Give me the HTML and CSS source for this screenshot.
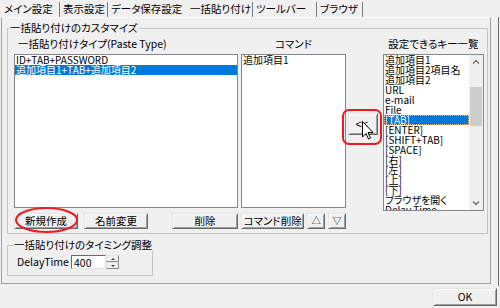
FILE: index.html
```html
<!DOCTYPE html>
<html lang="ja">

<head>
    <meta charset="UTF-8" />
    <title>設定</title>
    <link rel="stylesheet" href="styles.css">
</head>

<body>
    <div class="tabs">
        <div class="tab tab-main">メイン設定</div>
        <div class="tab tab-view">表示設定</div>
        <div class="tab tab-data">データ保存設定</div>
        <div class="tab tab-paste active">一括貼り付け</div>
        <div class="tab tab-tool">ツールバー</div>
        <div class="tab tab-browser">ブラウザ</div>
    </div>

    <div class="frame">
        <div class="panel">
            <fieldset class="group group-custom">
                <legend>一括貼り付けのカスタマイズ</legend>
                <div class="columns">
                    <div class="col col-type">
                        <div class="col-label label-left">一括貼り付けタイプ(Paste Type)</div>
                        <div class="listbox list-type">
                            <div class="item">ID+TAB+PASSWORD</div>
                            <div class="item selected">追加項目1+TAB+追加項目2</div>
                        </div>
                        <div class="btn-row">
                            <button class="btn btn-wide marked">新規作成
                                <svg class="mark-ellipse" width="63" height="26" viewBox="0 0 63 26">
                                    <ellipse cx="31.5" cy="13" rx="30.5" ry="12" fill="none" stroke="#ec1c24" stroke-width="2" />
                                </svg>
                            </button>
                            <button class="btn btn-wide btn-rename">名前変更</button>
                            <button class="btn btn-delete">削除</button>
                        </div>
                    </div>

                    <div class="col col-command">
                        <div class="col-label">コマンド</div>
                        <div class="listbox list-command">
                            <div class="item">追加項目1</div>
                        </div>
                        <div class="btn-row">
                            <button class="btn btn-wide">コマンド削除</button>
                            <button class="btn btn-arrow">△</button>
                            <button class="btn btn-arrow">▽</button>
                        </div>
                    </div>

                    <div class="col col-move">
                        <div class="move-wrap">
                            <button class="btn btn-move">&lt;&lt;</button>
                            <span class="mark-box"></span>
                            <svg class="cursor" width="12" height="19" viewBox="0 0 12 19">
                                <path d="M0.5 0.5 V16 L4 12.5 L6.5 18 L8.5 17 L6 11.5 H11 Z" fill="#fff" stroke="#000" stroke-width="1" stroke-linejoin="round" />
                            </svg>
                        </div>
                    </div>

                    <div class="col col-keys">
                        <div class="col-label">設定できるキー一覧</div>
                        <div class="listbox list-keys">
                            <div class="key-items">
                                <div class="item">追加項目1</div>
                                <div class="item">追加項目2項目名</div>
                                <div class="item">追加項目2</div>
                                <div class="item">URL</div>
                                <div class="item">e-mail</div>
                                <div class="item">File</div>
                                <div class="item selected focused">[TAB]</div>
                                <div class="item">[ENTER]</div>
                                <div class="item">[SHIFT+TAB]</div>
                                <div class="item">[SPACE]</div>
                                <div class="item">[右]</div>
                                <div class="item">[左]</div>
                                <div class="item">[上]</div>
                                <div class="item">[下]</div>
                                <div class="item">ブラウザを開く</div>
                                <div class="item">Delay Time</div>
                            </div>
                            <div class="scrollbar">
                                <div class="sb-btn">
                                    <svg width="8" height="6" viewBox="0 0 8 6"><path d="M1 4.5 L4 1.5 L7 4.5" fill="none" stroke="#606060" stroke-width="1.2" /></svg>
                                </div>
                                <div class="sb-thumb"></div>
                                <div class="sb-btn sb-down">
                                    <svg width="8" height="6" viewBox="0 0 8 6"><path d="M1 1.5 L4 4.5 L7 1.5" fill="none" stroke="#606060" stroke-width="1.2" /></svg>
                                </div>
                            </div>
                        </div>
                    </div>
                </div>
            </fieldset>

            <fieldset class="group group-timing">
                <legend>一括貼り付けのタイミング調整</legend>
                <div class="delay-row">
                    <label class="delay-label" for="delay">DelayTime</label>
                    <input class="delay-input" id="delay" type="text" value="400" />
                    <div class="spinner">
                        <span class="spin spin-up"></span>
                        <span class="spin spin-down"></span>
                    </div>
                </div>
            </fieldset>
        </div>
    </div>

    <div class="footer">
        <button class="btn btn-ok">OK</button>
    </div>
</body>

</html>
```

FILE: styles.css
```css
* {
    box-sizing: border-box;
}

body {
    margin: 0;
    width: 500px;
    height: 308px;
    overflow: hidden;
    background: #f0f0f0;
    color: #000;
    font-family: 'Noto Sans CJK JP', sans-serif;
    font-size: 10.5px;
    font-feature-settings: "palt";
}

/* tab strip */

.tabs {
    display: flex;
    height: 17px;
    padding-left: 1px;
}

.tab {
    margin-top: 2px;
    height: 15px;
    line-height: 14px;
    padding-left: 3px;
    border-right: 1px solid #7a7a7a;
    white-space: nowrap;
    overflow: hidden;
}

.tab-main {
    width: 59px;
}

.tab-view {
    width: 48px;
}

.tab-data {
    width: 78px;
    border-right: none;
}

.tab-paste {
    width: 67px;
    padding-left: 4px;
}

.tab-tool {
    width: 64px;
}

.tab-browser {
    width: 46px;
}

/* page frame */

.frame {
    width: 499px;
    height: 269px;
    padding-left: 1px;
    border-right: 1px solid #6d6d6d;
}

.panel {
    width: 490px;
    height: 267px;
    border: 1px solid #a0a0a0;
    border-top-color: #fff;
    padding: 4px 0 0 5px;
}

.group {
    margin: 0;
    min-width: 0;
    border: 1px solid #c4c4c4;
    padding: 0 3px 4px 2px;
}

.group legend {
    height: 12px;
    line-height: 12px;
    padding: 0 1px;
    margin-left: -1px;
    white-space: nowrap;
}

.group-custom {
    width: 481px;
}

.columns {
    display: flex;
    margin-left: 4px;
}

.col-label {
    height: 12px;
    line-height: 12px;
    margin-top: 4px;
    text-align: center;
    white-space: nowrap;
}

.label-left {
    text-align: left;
    padding-left: 4px;
}

.col-type {
    width: 224px;
}

.col-command {
    width: 105px;
    margin-left: 3px;
}

.col-move {
    width: 30px;
    margin-left: 2px;
}

.col-keys {
    width: 101px;
    margin-left: 5px;
}

/* list boxes */

.listbox {
    margin-top: 4px;
    background: #fff;
    border: 1px solid #828790;
    font-size: 10px;
    line-height: 10px;
}

.list-type {
    height: 154px;
}

.list-command {
    width: 105px;
    height: 154px;
}

.list-keys {
    display: flex;
    height: 157px;
}

.key-items {
    flex: 1;
    overflow: hidden;
}

.item {
    height: 10px;
    padding-left: 1px;
    white-space: nowrap;
}

.item.selected {
    background: #0078d7;
    color: #fff;
}

.item.focused {
    outline: 1px dotted #f3c58c;
    outline-offset: -1px;
}

.scrollbar {
    width: 14px;
    display: flex;
    flex-direction: column;
    background: #f0f0f0;
}

.sb-btn {
    height: 14px;
    display: flex;
    align-items: center;
    justify-content: center;
}

.sb-thumb {
    height: 39px;
    margin: 18px 1px 0 1px;
    background: #cdcdcd;
}

.sb-down {
    margin-top: auto;
}

/* buttons */

.btn {
    position: relative;
    height: 16px;
    padding: 0;
    font-family: inherit;
    font-size: 10.5px;
    font-feature-settings: "palt";
    line-height: 12px;
    color: #000;
    background: #f0f0f0;
    border: 1px solid;
    border-color: #e3e3e3 #696969 #696969 #e3e3e3;
    box-shadow: inset 1px 1px #fff, inset -1px -1px #a0a0a0;
    white-space: nowrap;
}

.btn-row {
    display: flex;
    margin-top: 5px;
}

.btn-wide {
    width: 64px;
}

.btn-rename {
    margin-left: 6px;
}

.btn-delete {
    width: 66px;
    margin-left: auto;
}

.btn-arrow {
    width: 18px;
    margin-left: 3px;
    font-size: 9px;
}

.mark-ellipse {
    position: absolute;
    left: 0;
    top: -7px;
}

.move-wrap {
    position: relative;
    margin-top: 79px;
}

.btn-move {
    width: 30px;
    height: 22px;
    font-family: 'Liberation Sans', sans-serif;
    font-size: 11px;
    line-height: 20px;
    padding-right: 2px;
}

.mark-box {
    position: absolute;
    left: -6px;
    top: -4px;
    width: 40px;
    height: 36px;
    border: 2px solid #ec1c24;
    border-radius: 7px;
}

.cursor {
    position: absolute;
    left: 14px;
    top: 8px;
}

/* timing group */

.group-timing {
    width: 146px;
    margin-top: 5px;
    padding: 0 3px 6px 2px;
}

.group-timing legend {
    margin-left: 3px;
}

.delay-row {
    display: flex;
    margin-top: 4px;
    height: 14px;
}

.delay-label {
    width: 61px;
    padding-left: 7px;
    line-height: 14px;
}

.delay-input {
    width: 35px;
    height: 14px;
    padding: 0 0 0 2px;
    margin: 0;
    font-family: inherit;
    font-size: 10.5px;
    border: 1px solid;
    border-color: #696969 #e3e3e3 #e3e3e3 #696969;
    background: #fff;
    outline: none;
}

.spinner {
    width: 13px;
    display: flex;
    flex-direction: column;
}

.spin {
    height: 7px;
    background: #f0f0f0;
    border: 1px solid;
    border-color: #e3e3e3 #8a8a8a #8a8a8a #e3e3e3;
    display: flex;
    align-items: center;
    justify-content: center;
}

.spin::after {
    content: "";
    border-left: 2px solid transparent;
    border-right: 2px solid transparent;
}

.spin-up::after {
    border-bottom: 2px solid #404040;
}

.spin-down::after {
    border-top: 2px solid #404040;
}

/* bottom bar */

.footer {
    display: flex;
    justify-content: flex-end;
    padding: 2px 3px 0 0;
}

.btn-ok {
    width: 64px;
    height: 18px;
}
```
